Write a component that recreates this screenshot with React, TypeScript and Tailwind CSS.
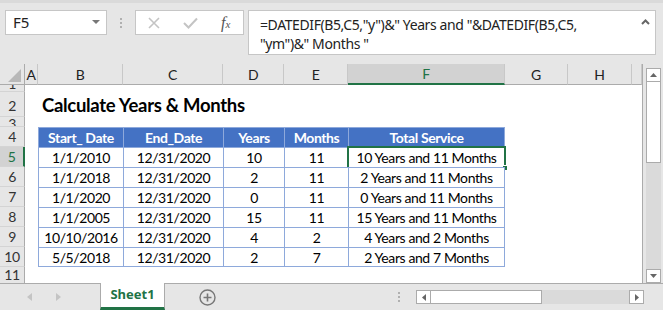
import React from 'react';

const COLS = ['A', 'B', 'C', 'D', 'E', 'F', 'G', 'H', ''];

const HEADERS = ['Start_ Date', 'End_Date', 'Years', 'Months', 'Total Service'];

const DATA = [
  ['1/1/2010', '12/31/2020', '10', '11', '10 Years and 11 Months'],
  ['1/1/2018', '12/31/2020', '2', '11', '2 Years and 11 Months'],
  ['1/1/2020', '12/31/2020', '0', '11', '0 Years and 11 Months'],
  ['1/1/2005', '12/31/2020', '15', '11', '15 Years and 11 Months'],
  ['10/10/2016', '12/31/2020', '4', '2', '4 Years and 2 Months'],
  ['5/5/2018', '12/31/2020', '2', '7', '2 Years and 7 Months'],
];

const cellFont = 'font-["Lato",sans-serif] text-[14px] tracking-[-0.4px]';

function RowHead({ n, active, align = 'items-center', extra = '' }: { n: number; active?: boolean; align?: string; extra?: string }) {
  return (
    <div
      className={`flex justify-center overflow-hidden border-b ${align} ${extra} ${
        active
          ? 'bg-[#d2d2d2] text-[#217346] border-b-[#d4d4d4] border-r-2 border-r-[#217346]'
          : 'bg-[#e6e6e6] text-[#333] border-b-[#d4d4d4] border-r border-r-[#ababab]'
      }`}
    >
      <span className="leading-[14px]">{n}</span>
    </div>
  );
}

function Blank({ n }: { n: number }) {
  return (
    <>
      {Array.from({ length: n }).map((_, i) => (
        <div key={i} className="bg-white" />
      ))}
    </>
  );
}

export default function App() {
  return (
    <div className={`w-[663px] h-[310px] overflow-hidden bg-[#e6e6e6] flex flex-col ${cellFont}`}>
      {/* top bar */}
      <div className="h-[64px] shrink-0 flex flex-col">
        <div className="h-[3px] bg-[#dadada]" />
        <div className="flex items-start pt-[7px] font-['Noto_Sans',sans-serif] tracking-normal">
          <div className="ml-[5px] w-[102px] h-[25px] bg-white border border-[#c6c6c6] flex items-center pl-[7px] pr-[6px] text-[15px] text-[#222]">
            <span className="flex-1">F5</span>
            <svg width="8" height="5" viewBox="0 0 8 5">
              <path d="M0 0 L8 0 L4 4 Z" fill="#777" />
            </svg>
          </div>
          <div className="ml-[13px] mt-[8px] flex flex-col gap-[2px]">
            <div className="w-[2px] h-[2px] bg-[#b0b0b0]" />
            <div className="w-[2px] h-[2px] bg-[#b0b0b0]" />
            <div className="w-[2px] h-[2px] bg-[#b0b0b0]" />
          </div>
          <div className="ml-[13px] w-[109px] h-[25px] bg-white border border-[#c6c6c6] flex items-center">
            <svg className="ml-[12px]" width="12" height="12" viewBox="0 0 12 12">
              <path d="M1 1 L11 11 M11 1 L1 11" stroke="#c4c4c4" strokeWidth="1.6" />
            </svg>
            <svg className="ml-[23px]" width="15" height="12" viewBox="0 0 15 12">
              <path d="M1 6 L5.5 10.5 L14 1.5" stroke="#c4c4c4" strokeWidth="2" fill="none" />
            </svg>
            <span className="ml-[23px] font-['Liberation_Serif',serif] italic text-[16px] text-[#555] leading-none">
              f<span className="text-[11px]">x</span>
            </span>
          </div>
          <div className="ml-[4px] w-[408px] h-[45px] bg-white border border-[#c6c6c6] flex">
            <div className="flex-1 pl-[11px] pt-[4px] text-[14px] tracking-[-0.4px] leading-[19px] text-[#222] whitespace-nowrap">
              =DATEDIF(B5,C5,"y")&amp;" Years and "&amp;DATEDIF(B5,C5,
              <br />
              "ym")&amp;" Months "
            </div>
            <svg className="mt-[8px] mr-[5px]" width="9" height="6" viewBox="0 0 9 6">
              <path d="M1 5 L4.5 1.5 L8 5" stroke="#666" strokeWidth="2" fill="none" />
            </svg>
          </div>
        </div>
      </div>

      {/* sheet + vertical scrollbar */}
      <div className="h-[219px] shrink-0 flex">
        <div className="w-[643px] border-r border-[#ababab] bg-white grid grid-cols-[25px_13px_85px_100px_61px_64px_157px_63px_64px_10px] grid-rows-[21px_7px_25px_10px_repeat(7,20px)_16px]">
          {/* column header row */}
          <div className="bg-[#e6e6e6] border-r border-r-[#ababab] border-b border-b-[#ababab] flex items-end justify-end pr-[3px] pb-[2px]">
            <svg width="13" height="13" viewBox="0 0 13 13">
              <path d="M13 0 L13 13 L0 13 Z" fill="#b8b8b8" />
            </svg>
          </div>
          {COLS.map((c) =>
            c === 'F' ? (
              <div
                key={c}
                className="bg-[#d2d2d2] text-[#217346] border-r border-r-[#c8c8c8] border-b-2 border-b-[#217346] flex items-center justify-center"
              >
                {c}
              </div>
            ) : (
              <div
                key={c || 'I'}
                className="bg-[#e6e6e6] text-[#222] border-r border-r-[#c8c8c8] border-b border-b-[#ababab] flex items-center justify-center"
              >
                {c}
              </div>
            )
          )}

          {/* row 1 */}
          <RowHead n={1} align="items-end" />
          <Blank n={9} />

          {/* row 2 */}
          <RowHead n={2} align="items-end" extra="pb-[3px]" />
          <div className="bg-white" />
          <div className="relative z-10 bg-white flex items-end pl-[4px] pb-[1px]">
            <span className="font-['Lato',sans-serif] font-bold text-[18.5px] tracking-[-0.3px] text-black whitespace-nowrap leading-[22px]">
              Calculate Years &amp; Months
            </span>
          </div>
          <Blank n={7} />

          {/* row 3 */}
          <RowHead n={3} align="items-start" />
          <Blank n={9} />

          {/* row 4: table header */}
          <RowHead n={4} />
          <div className="bg-white" />
          {HEADERS.map((h, i) => (
            <div
              key={h}
              className={`bg-[#4472c4] text-white font-bold flex items-center justify-center whitespace-nowrap border-l border-t border-[#8ea9db] ${
                i === 4 ? 'border-r' : ''
              }`}
            >
              {h}
            </div>
          ))}
          <Blank n={3} />

          {/* data rows 5-10 */}
          {DATA.map((r, ri) => (
            <React.Fragment key={ri}>
              <RowHead n={ri + 5} active={ri === 0} />
              <div className="bg-white" />
              {r.map((v, ci) => (
                <div
                  key={ci}
                  className={`relative bg-white text-black flex items-center justify-center whitespace-nowrap border-l border-t border-[#8ea9db] ${
                    ci === 4 ? 'border-r' : ''
                  } ${ri === DATA.length - 1 ? 'border-b' : ''}`}
                >
                  {v}
                  {ri === 0 && ci === 4 && (
                    <>
                      <div className="absolute -left-[2px] -top-[2px] -right-[2px] -bottom-[2px] border-2 border-[#217346]" />
                      <div className="absolute -right-[4px] -bottom-[4px] w-[6px] h-[6px] bg-[#217346] border border-white" />
                    </>
                  )}
                </div>
              ))}
              <Blank n={3} />
            </React.Fragment>
          ))}

          {/* row 11 */}
          <RowHead n={11} align="items-start" extra="pt-[1px] border-b-0" />
          <Blank n={9} />
        </div>

        <div className="w-[20px] flex flex-col pt-[4px] pl-[3px] pr-[2px]">
          <div className="h-[14px] bg-white border border-[#ababab] flex items-center justify-center">
            <svg width="7" height="4" viewBox="0 0 7 4">
              <path d="M0 4 L7 4 L3.5 0 Z" fill="#666" />
            </svg>
          </div>
          <div className="h-[81px] bg-white border-x border-b border-[#ababab]" />
          <div className="flex-1 bg-[#dadada]" />
          <div className="h-[14px] bg-white border border-[#ababab] flex items-center justify-center">
            <svg width="7" height="4" viewBox="0 0 7 4">
              <path d="M0 0 L7 0 L3.5 4 Z" fill="#666" />
            </svg>
          </div>
        </div>
      </div>

      {/* bottom tab bar */}
      <div className="h-[27px] shrink-0 border-t border-[#ababab] flex items-center">
        <div className="w-[100px] flex items-center">
          <svg className="ml-[27px]" width="5" height="8" viewBox="0 0 5 8">
            <path d="M5 0 L5 8 L0 4 Z" fill="#c4c4c4" />
          </svg>
          <svg className="ml-[24px]" width="5" height="8" viewBox="0 0 5 8">
            <path d="M0 0 L0 8 L5 4 Z" fill="#c4c4c4" />
          </svg>
        </div>
        <div className="w-[65px] self-stretch -mt-px h-[27px] bg-white border-x border-[#ababab] border-b-[3px] border-b-[#217346] flex items-center justify-center font-['Noto_Sans',sans-serif] font-bold text-[13px] tracking-normal text-[#217346]">
          Sheet1
        </div>
        <svg className="ml-[34px]" width="17" height="17" viewBox="0 0 17 17">
          <circle cx="8.5" cy="8.5" r="7.5" stroke="#777" strokeWidth="1.4" fill="none" />
          <path d="M8.5 4.5 L8.5 12.5 M4.5 8.5 L12.5 8.5" stroke="#777" strokeWidth="1.6" />
        </svg>
        <div className="ml-[182px] flex flex-col gap-[2px]">
          <div className="w-[2px] h-[2px] bg-[#b0b0b0]" />
          <div className="w-[2px] h-[2px] bg-[#b0b0b0]" />
          <div className="w-[2px] h-[2px] bg-[#b0b0b0]" />
        </div>
        <div className="ml-[16px] w-[228px] h-[14px] flex">
          <div className="w-[15px] bg-white border border-[#ababab] flex items-center justify-center">
            <svg width="4" height="7" viewBox="0 0 4 7">
              <path d="M4 0 L4 7 L0 3.5 Z" fill="#666" />
            </svg>
          </div>
          <div className="w-[111px] bg-white border-y border-r border-[#ababab]" />
          <div className="flex-1 bg-[#dadada]" />
          <div className="w-[15px] bg-white border border-[#ababab] flex items-center justify-center">
            <svg width="4" height="7" viewBox="0 0 4 7">
              <path d="M0 0 L0 7 L4 3.5 Z" fill="#666" />
            </svg>
          </div>
        </div>
      </div>
    </div>
  );
}
